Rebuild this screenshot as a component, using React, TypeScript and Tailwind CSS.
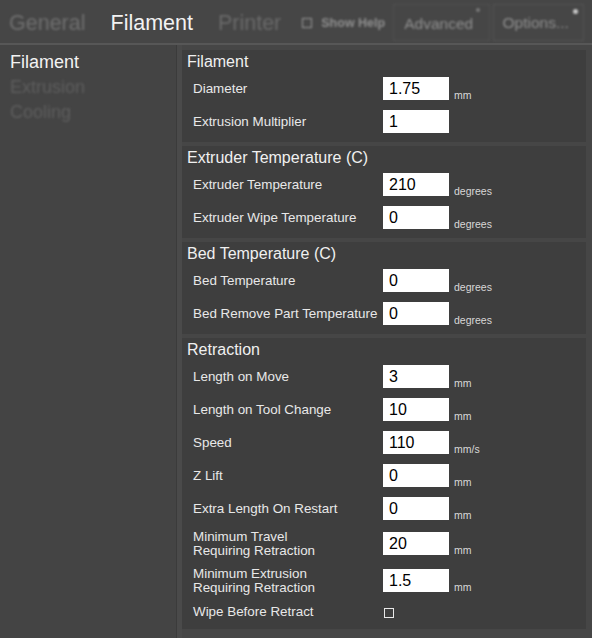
import React from "react";

type Row = { label: React.ReactNode; value?: string; unit?: string; two?: boolean; check?: boolean };
type Section = { title: string; rows: Row[] };

const sections: Section[] = [
  {
    title: "Filament",
    rows: [
      { label: "Diameter", value: "1.75", unit: "mm" },
      { label: "Extrusion Multiplier", value: "1" },
    ],
  },
  {
    title: "Extruder Temperature (C)",
    rows: [
      { label: "Extruder Temperature", value: "210", unit: "degrees" },
      { label: "Extruder Wipe Temperature", value: "0", unit: "degrees" },
    ],
  },
  {
    title: "Bed Temperature (C)",
    rows: [
      { label: "Bed Temperature", value: "0", unit: "degrees" },
      { label: "Bed Remove Part Temperature", value: "0", unit: "degrees" },
    ],
  },
  {
    title: "Retraction",
    rows: [
      { label: "Length on Move", value: "3", unit: "mm" },
      { label: "Length on Tool Change", value: "10", unit: "mm" },
      { label: "Speed", value: "110", unit: "mm/s" },
      { label: "Z Lift", value: "0", unit: "mm" },
      { label: "Extra Length On Restart", value: "0", unit: "mm" },
      {
        label: (
          <>
            Minimum Travel
            <br />
            Requiring Retraction
          </>
        ),
        value: "20",
        unit: "mm",
        two: true,
      },
      {
        label: (
          <>
            Minimum Extrusion
            <br />
            Requiring Retraction
          </>
        ),
        value: "1.5",
        unit: "mm",
        two: true,
      },
      { label: "Wipe Before Retract", check: true },
    ],
  },
];

function RowView({ row }: { row: Row }) {
  const h = row.check ? "h-[26px]" : row.two ? "h-[37px]" : "h-[33px]";
  return (
    <div className={`flex items-center ${h} pl-[11px]`}>
      <div className="w-[190px] text-[13.4px] leading-[13.5px] text-[#e8e8e8] whitespace-nowrap">{row.label}</div>
      {row.check ? (
        <div className="ml-[1px] mt-[1px] w-[10px] h-[10px] border border-[#e8e8e8]" />
      ) : (
        <div className="w-[66px] h-[23px] bg-white text-black text-[16px] leading-[23px] pl-[6px]">{row.value}</div>
      )}
      {row.unit && (
        <span className="ml-[5px] mt-[12px] text-[10.5px] leading-[12px] text-[#d8d8d8]">{row.unit}</span>
      )}
    </div>
  );
}

export default function App() {
  return (
    <div className="w-[592px] h-[638px] bg-[#464646] overflow-hidden font-['Liberation_Sans',Arial,sans-serif] flex flex-col">
      {/* Header */}
      <div className="h-[43px] flex items-center shrink-0">
        <span className="ml-[9px] mt-[3px] text-[21.5px] text-[#6f6f6f] blur-[1.2px]">General</span>
        <span className="ml-[25px] mt-[3px] text-[21.5px] text-[#f2f2f2]">Filament</span>
        <span className="ml-[25px] mt-[3px] text-[21.5px] text-[#6a6a6a] blur-[1.2px]">Printer</span>
        <div className="ml-[21px] mt-[3px] flex items-center blur-[0.9px]">
          <div className="w-[10px] h-[10px] border border-[#9a9a9a]" />
          <span className="ml-[9px] text-[12.5px] font-bold text-[#8f8f8f]">Show Help</span>
        </div>
        <div className="relative ml-[8px] mt-[2px] h-[37px] w-[97px] border border-[#525252] flex items-center justify-center blur-[0.9px]">
          <span className="text-[15.5px] text-[#8f8f8f] mt-[3px] mr-[6px]">Advanced</span>
          <span className="absolute right-[9px] top-[3px] w-[4px] h-[4px] rounded-full bg-[#7a7a7a]" />
        </div>
        <div className="relative ml-[3px] mt-[2px] h-[37px] w-[91px] border border-[#555555] flex items-center justify-center blur-[0.9px]">
          <span className="text-[15.5px] text-[#8f8f8f] mt-[1px] mr-[6px]">Options...</span>
          <span className="absolute right-[5px] top-[4px] w-[5px] h-[5px] rounded-full bg-[#c8c8c8]" />
        </div>
      </div>
      <div className="h-[2px] bg-[#575757] blur-[0.5px] shrink-0" />
      {/* Main */}
      <div className="flex flex-1">
        <div className="w-[176px] bg-[#444444] pt-[6px] pl-[10px] flex flex-col">
          <span className="text-[18px] leading-[22px] text-[#f2f2f2]">Filament</span>
          <span className="mt-[3px] text-[18px] leading-[22px] text-[#5e5e5e] blur-[1.2px]">Extrusion</span>
          <span className="mt-[3px] text-[18px] leading-[22px] text-[#5e5e5e] blur-[1.2px]">Cooling</span>
        </div>
        <div className="w-[1px] bg-[#3b3b3b]" />
        <div className="w-[5px] bg-[#4a4a4a]" />
        <div className="w-[404px] pt-[5px] flex flex-col gap-[4px]">
          {sections.map((s) => (
            <div key={s.title} className="bg-[#3e3e3e] pt-[2px] pb-[4px]">
              <div className="h-[20px] leading-[20px] pl-[5px] text-[16px] text-[#f0f0f0]">{s.title}</div>
              {s.rows.map((r, i) => (
                <RowView key={i} row={r} />
              ))}
            </div>
          ))}
        </div>
      </div>
    </div>
  );
}
